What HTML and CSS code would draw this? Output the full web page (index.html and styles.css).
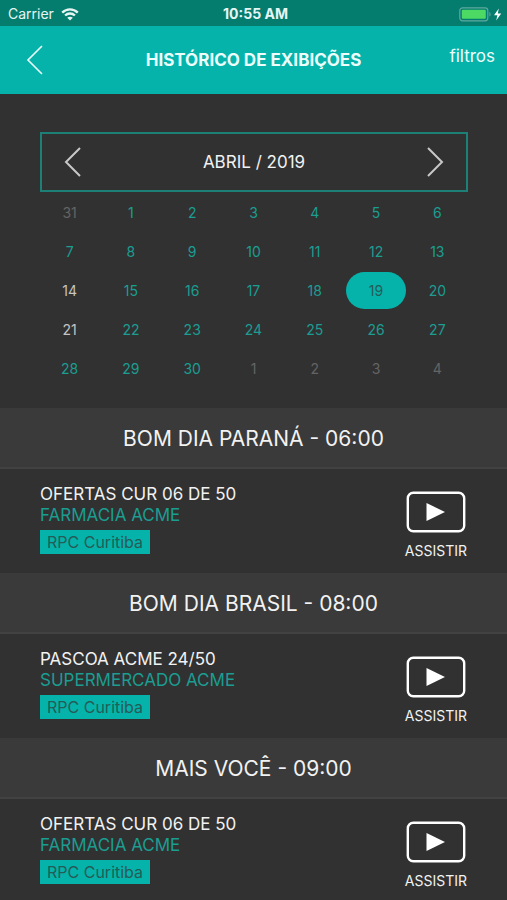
FILE: index.html
```html
<!DOCTYPE html>
<html lang="pt-BR">
<head>
  <meta charset="utf-8">
  <meta name="viewport" content="width=device-width, initial-scale=1">
  <title>Histórico de exibições</title>
  <link rel="stylesheet" href="styles.css">
</head>
<body>
  <div class="status-bar">
    <div class="carrier">
      <span>Carrier</span>
      <svg class="wifi" width="18" height="13" viewBox="0 0 18 13" fill="none" stroke="currentColor" stroke-width="2.4">
        <path d="M1.2 4.6C5.6 0.3 12.4 0.3 16.8 4.6"/>
        <path d="M4.1 7.5C6.9 4.8 11.1 4.8 13.9 7.5"/>
        <path d="M9 12.6L6.2 9.8C7.8 8.3 10.2 8.3 11.8 9.8Z" fill="currentColor" stroke="none"/>
      </svg>
    </div>
    <div class="clock">10:55 AM</div>
    <div class="battery">
      <svg width="44" height="15" viewBox="0 0 44 15">
        <rect x="0.8" y="0.8" width="28" height="13" rx="2.8" fill="none" stroke="#5fa99f" stroke-width="1.2"/>
        <rect x="2.8" y="2.8" width="24" height="9" rx="1" fill="#4cd964"/>
        <path d="M30.4 5C32 5.6 32 9 30.4 9.6Z" fill="#5fa99f"/>
        <path d="M39.8 1.4L35 8.2H38.4L37.2 13.4L42.2 6.4H38.8Z" fill="#fff"/>
      </svg>
    </div>
  </div>

  <header class="nav-bar">
    <button class="icon-btn back" aria-label="Voltar">
      <svg width="18" height="30" viewBox="0 0 18 30" fill="none" stroke="currentColor" stroke-width="1.6">
        <path d="M16 1L2 15L16 29"/>
      </svg>
    </button>
    <h1>HISTÓRICO DE EXIBIÇÕES</h1>
    <a class="filters" href="#">filtros</a>
  </header>

  <main class="content">
    <section class="calendar">
      <div class="month">
        <button class="icon-btn" aria-label="Mês anterior">
          <svg width="18" height="30" viewBox="0 0 18 30" fill="none" stroke="currentColor" stroke-width="2">
            <path d="M16 1L2 15L16 29"/>
          </svg>
        </button>
        <h2>ABRIL / 2019</h2>
        <button class="icon-btn" aria-label="Próximo mês">
          <svg width="18" height="30" viewBox="0 0 18 30" fill="none" stroke="currentColor" stroke-width="2">
            <path d="M2 1L16 15L2 29"/>
          </svg>
        </button>
      </div>
      <div class="days">
        <button class="day outside">31</button>
        <button class="day">1</button>
        <button class="day">2</button>
        <button class="day">3</button>
        <button class="day">4</button>
        <button class="day">5</button>
        <button class="day">6</button>
        <button class="day">7</button>
        <button class="day">8</button>
        <button class="day">9</button>
        <button class="day">10</button>
        <button class="day">11</button>
        <button class="day">12</button>
        <button class="day">13</button>
        <button class="day empty">14</button>
        <button class="day">15</button>
        <button class="day">16</button>
        <button class="day">17</button>
        <button class="day">18</button>
        <button class="day selected">19</button>
        <button class="day">20</button>
        <button class="day empty">21</button>
        <button class="day">22</button>
        <button class="day">23</button>
        <button class="day">24</button>
        <button class="day">25</button>
        <button class="day">26</button>
        <button class="day">27</button>
        <button class="day">28</button>
        <button class="day">29</button>
        <button class="day">30</button>
        <button class="day outside">1</button>
        <button class="day outside">2</button>
        <button class="day outside">3</button>
        <button class="day outside">4</button>
      </div>
    </section>

    <section class="program">
      <h2 class="program-title">BOM DIA PARANÁ - 06:00</h2>
      <div class="entry">
        <div class="info">
          <div class="spot">OFERTAS CUR 06 DE 50</div>
          <div class="client">FARMACIA ACME</div>
          <span class="tag">RPC Curitiba</span>
        </div>
        <button class="watch">
          <svg width="60" height="42" viewBox="0 0 60 42">
            <rect x="1.8" y="1.8" width="56.4" height="38.4" rx="5.5" fill="none" stroke="#fff" stroke-width="2.4"/>
            <path d="M20.5 12L39 21L20.5 30Z" fill="#fff"/>
          </svg>
          <span>ASSISTIR</span>
        </button>
      </div>
    </section>

    <section class="program">
      <h2 class="program-title">BOM DIA BRASIL - 08:00</h2>
      <div class="entry">
        <div class="info">
          <div class="spot">PASCOA ACME 24/50</div>
          <div class="client">SUPERMERCADO ACME</div>
          <span class="tag">RPC Curitiba</span>
        </div>
        <button class="watch">
          <svg width="60" height="42" viewBox="0 0 60 42">
            <rect x="1.8" y="1.8" width="56.4" height="38.4" rx="5.5" fill="none" stroke="#fff" stroke-width="2.4"/>
            <path d="M20.5 12L39 21L20.5 30Z" fill="#fff"/>
          </svg>
          <span>ASSISTIR</span>
        </button>
      </div>
    </section>

    <section class="program">
      <h2 class="program-title">MAIS VOCÊ - 09:00</h2>
      <div class="entry">
        <div class="info">
          <div class="spot">OFERTAS CUR 06 DE 50</div>
          <div class="client">FARMACIA ACME</div>
          <span class="tag">RPC Curitiba</span>
        </div>
        <button class="watch">
          <svg width="60" height="42" viewBox="0 0 60 42">
            <rect x="1.8" y="1.8" width="56.4" height="38.4" rx="5.5" fill="none" stroke="#fff" stroke-width="2.4"/>
            <path d="M20.5 12L39 21L20.5 30Z" fill="#fff"/>
          </svg>
          <span>ASSISTIR</span>
        </button>
      </div>
    </section>
  </main>
</body>
</html>
```
FILE: styles.css
```css
* {
  box-sizing: border-box;
}

body {
  display: flex;
  flex-direction: column;
  height: 100vh;
  margin: 0;
  background: #313131;
  color: #f2f2f2;
  font-family: Inter, "Liberation Sans", sans-serif;
  font-size: 16px;
}

h1,
h2 {
  margin: 0;
}

button {
  padding: 0;
  border: none;
  background: none;
  color: inherit;
  font-family: inherit;
  cursor: pointer;
}

svg {
  display: block;
}

/* Status bar */
.status-bar {
  display: grid;
  grid-template-columns: 1fr auto 1fr;
  align-items: center;
  flex: none;
  height: 26px;
  padding: 2px 4px 0 8px;
  background: #047c6e;
  color: #e6f5f3;
  font-size: 14px;
  line-height: 20px;
}

.carrier {
  display: flex;
  align-items: center;
  gap: 7px;
}

.clock {
  font-weight: 700;
}

.battery {
  justify-self: end;
}

/* Navigation */
.nav-bar {
  display: grid;
  grid-template-columns: 1fr auto 1fr;
  align-items: center;
  flex: none;
  height: 68px;
  padding: 0 12px;
  background: #05b3aa;
  color: #ecfffd;
}

.nav-bar h1 {
  font-size: 17px;
  font-weight: 700;
  line-height: 24px;
}

.back {
  justify-self: start;
  margin-left: 14px;
}

.filters {
  justify-self: end;
  padding-bottom: 8px;
  color: inherit;
  font-size: 17px;
  line-height: 24px;
  text-decoration: none;
}

.content {
  flex: 1;
  min-height: 0;
  overflow-y: auto;
  scrollbar-width: none;
}

/* Calendar */
.calendar {
  padding: 38px 39px 21px 40px;
}

.month {
  display: flex;
  align-items: center;
  justify-content: space-between;
  height: 60px;
  padding: 0 22px;
  border: 2px solid #1d8077;
}

.month h2 {
  font-size: 17px;
  font-weight: 400;
}

.month .icon-btn {
  color: #c8c8c8;
}

.days {
  display: grid;
  grid-template-columns: repeat(7, 1fr);
  gap: 2px;
  padding: 2px 1px 0 0;
}

.day {
  height: 37px;
  border-radius: 19px;
  color: #1b9d92;
  font-size: 14px;
}

.day.outside {
  color: #646464;
}

.day.empty {
  color: #c4c4c4;
}

.day.selected {
  background: #05b3aa;
  color: #245c58;
}

/* Programs */
.program-title {
  height: 61px;
  border-bottom: 2px solid #424242;
  background: #3a3a3a;
  font-size: 21px;
  font-weight: 400;
  line-height: 61px;
  text-align: center;
}

.entry {
  display: flex;
  justify-content: space-between;
  height: 104px;
  padding: 15px 40px 0 40px;
}

.spot,
.client {
  font-size: 17px;
  line-height: 21px;
}

.client {
  color: #1b9d92;
}

.tag {
  display: inline-block;
  margin-top: 4px;
  padding: 0 7px;
  background: #05b3aa;
  color: #245c58;
  font-size: 16px;
  line-height: 24px;
}

.watch {
  display: flex;
  flex-direction: column;
  align-items: center;
  align-self: flex-start;
  gap: 8px;
  padding-top: 7px;
  font-size: 14px;
  line-height: 20px;
}
```
